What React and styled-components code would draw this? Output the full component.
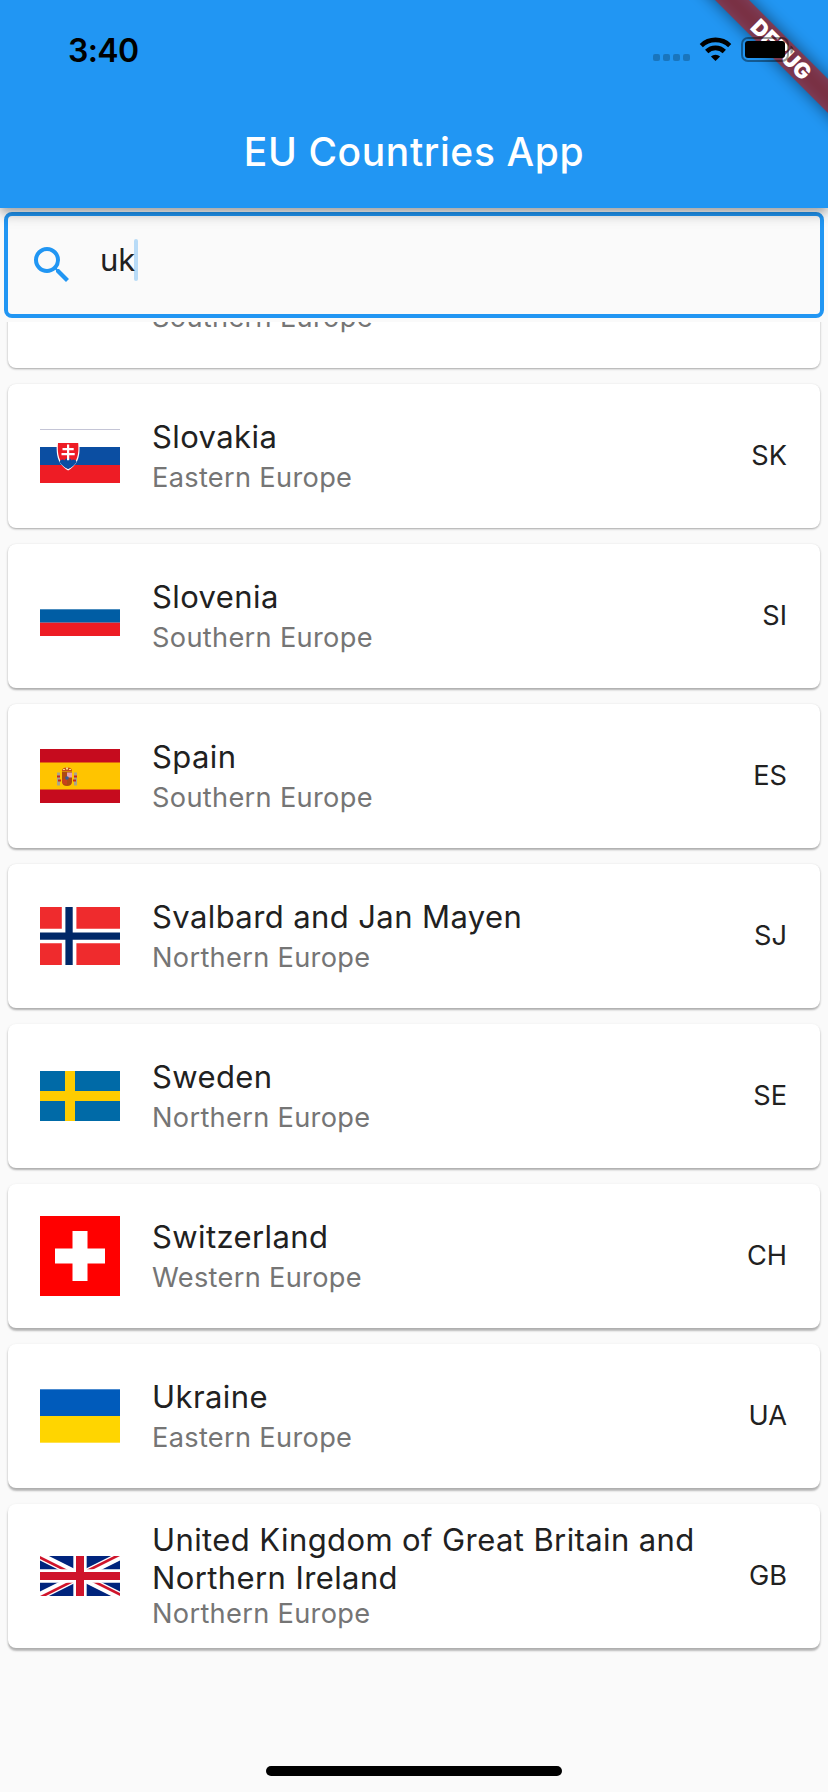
import React from "react";
import styled, { createGlobalStyle } from "styled-components";
import { MdSearch } from "react-icons/md";

const GlobalStyle = createGlobalStyle`
  * { box-sizing: border-box; }
  body {
    margin: 0;
    background: #fafafa;
    color: #212121;
    font-family: Inter, "Liberation Sans", sans-serif;
  }
`;

const Screen = styled.div`
  position: relative;
  width: 828px;
  height: 1792px;
  overflow: hidden;
  display: flex;
  flex-direction: column;
  background: #fafafa;
`;

const Header = styled.header`
  position: relative;
  z-index: 1;
  flex: none;
  height: 208px;
  display: flex;
  flex-direction: column;
  background: #2196f3;
  box-shadow: 0 4px 8px -2px rgba(0, 0, 0, 0.2), 0 8px 10px rgba(0, 0, 0, 0.14),
    0 2px 20px rgba(0, 0, 0, 0.12);
`;

const StatusBar = styled.div`
  position: relative;
  z-index: 2;
  height: 96px;
  padding: 0 33px 0 68px;
  display: flex;
  justify-content: space-between;
  color: #000;
`;

const Clock = styled.span`
  padding-top: 31px;
  font-size: 32px;
  line-height: 39px;
  font-weight: 600;
  letter-spacing: -0.6px;
`;

const StatusIcons = styled.svg`
  width: 145px;
  height: 30px;
  margin-top: 35px;
`;

const Title = styled.h1`
  margin: 0;
  height: 112px;
  text-align: center;
  font-size: 39px;
  line-height: 112px;
  font-weight: 500;
  letter-spacing: 0.6px;
  color: #fff;
`;

const BannerCorner = styled.div`
  position: absolute;
  top: 0;
  right: 0;
  width: 200px;
  height: 200px;
  overflow: hidden;
  z-index: 1;
`;

const Ribbon = styled.div`
  position: absolute;
  left: 32px;
  top: 36px;
  width: 240px;
  height: 24px;
  transform: rotate(45deg);
  display: grid;
  place-items: center;
  font-size: 21.6px;
  line-height: 24px;
  font-weight: 900;
  color: #fff;
`;

const RibbonShadow = styled.div`
  grid-area: 1 / 1;
  width: 240px;
  height: 24px;
  background: rgba(0, 0, 0, 0.5);
  filter: blur(8px);
`;

const RibbonBand = styled.div`
  grid-area: 1 / 1;
  width: 240px;
  height: 24px;
  padding-left: 4px;
  position: relative;
  text-align: center;
  background: rgba(183, 28, 28, 0.627);
`;

const SearchField = styled.div`
  flex: none;
  height: 106px;
  margin: 4px;
  padding: 0 20px;
  border: 4px solid #2196f3;
  border-radius: 8px;
  display: flex;
  align-items: flex-start;
`;

const SearchIcon = styled(MdSearch)`
  flex: none;
  width: 48px;
  height: 48px;
  margin-top: 25px;
  color: #2196f3;
`;

const Query = styled.span`
  margin: 23px 0 0 24px;
  font-size: 31px;
  line-height: 42px;
`;

const Caret = styled.span`
  width: 4px;
  height: 42px;
  margin: 23px 0 0 -1px;
  border-radius: 2px;
  background: rgba(33, 150, 243, 0.3);
`;

const List = styled.ul`
  flex: none;
  height: 1384px;
  margin: 0;
  padding: 0 8px 58px;
  overflow: hidden;
  list-style: none;
  display: flex;
  flex-direction: column;
  justify-content: flex-end;
  gap: 16px;
`;

const Card = styled.li`
  flex: none;
  height: 144px;
  padding: 0 33px 0 32px;
  border-radius: 8px;
  display: flex;
  align-items: center;
  background: #fff;
  box-shadow: 0 ${(p) => p.$drop}px 2px rgba(0, 0, 0, 0.24),
    0 1px 3px rgba(0, 0, 0, 0.12);
`;

const FlagBox = styled.div`
  flex: none;
  width: 80px;
  display: flex;

  svg {
    display: block;
    width: 80px;
  }
`;

const Labels = styled.div`
  flex: 1;
  min-width: 0;
  margin-left: 32px;
  padding-top: 1px;
`;

const Name = styled.div`
  max-width: 570px;
  min-height: 38px;
  font-size: 31px;
  line-height: 38px;
  letter-spacing: 0.4px;
`;

const Region = styled.div`
  margin-top: ${(p) => (p.$tall ? -1 : 4)}px;
  font-size: 27.2px;
  line-height: 36px;
  letter-spacing: 0.32px;
  color: #757575;
`;

const Code = styled.span`
  font-size: 27.2px;
  line-height: 36px;
`;

const HomeIndicator = styled.div`
  position: absolute;
  left: 266px;
  bottom: 16px;
  width: 296px;
  height: 10px;
  border-radius: 5px;
  background: #000;
`;

const flags = {
  SK: (
    <svg viewBox="0 0 80 54" height="54">
      <rect width="80" height="54" fill="#fff" />
      <rect width="80" height="1" fill="#c4c5d6" />
      <rect y="18" width="80" height="18" fill="#0b4ea2" />
      <rect y="36" width="80" height="18" fill="#ee1c25" />
      <path d="M16.9 13h22.4c.8 11 .3 22-11.2 28.4C16.6 35 16.1 24 16.9 13z" fill="#fff" />
      <path d="M18 14h20.2c.8 10-.2 20-10.1 26C18.2 34 17.2 24 18 14z" fill="#ee1c25" />
      <path d="M19.6 33c1-3 4-3 5-1.500 1-3 6-3 7 0 1-1.500 4-1.500 5 1.500-2 3-4.500 5.500-8.500 7-4-1.500-6.500-4-8.500-7z" fill="#0b4ea2" />
      <path d="M27 15.500h2.200v3.500h4.500v2.200h-4.500v2.800h5.500v2.200h-5.500v5h-2.200v-5h-5.500v-2.200h5.500v-2.800h-4.500v-2.200h4.500z" fill="#fff" />
    </svg>
  ),
  SI: (
    <svg viewBox="0 0 80 40" height="40">
      <rect width="80" height="40" fill="#fff" />
      <rect y="13.3" width="80" height="13.4" fill="#005da4" />
      <rect y="26.7" width="80" height="13.3" fill="#ed1c24" />
    </svg>
  ),
  ES: (
    <svg viewBox="0 0 80 54" height="54">
      <rect width="80" height="54" fill="#c60b1e" />
      <rect y="13.5" width="80" height="27" fill="#ffc400" />
      <g transform="translate(17 17.500)">
        <path d="M0 6h3v13H0zM17 6h3v13h-3z" fill="#a9a58a" />
        <path d="M0 9h3v2H0zM17 9h3v2h-3zM1 13h3v2H1zM16 13h3v2h-3z" fill="#c8281e" />
        <path d="M5 5h10v10c0 3-2 4.500-5 4.500S5 18 5 15z" fill="#ad4a12" />
        <path d="M10 6h5v5h-5z" fill="#e5a0ac" />
        <path d="M5 13h5v5c-3 0-5-1-5-3z" fill="#c8401c" />
        <circle cx="10" cy="11.5" r="1.8" fill="#345c9c" />
        <path d="M5 4.500c0-3 3-3.500 5-3.500s5 .5 5 3.500z" fill="#c84a1e" />
        <path d="M6 2.500h2v1H6zM9 1h2v2H9zM12 2.500h2v1h-2z" fill="#f5e08a" />
      </g>
    </svg>
  ),
  SJ: (
    <svg viewBox="0 0 80 58" height="58">
      <rect width="80" height="58" fill="#ef2b2d" />
      <path d="M21.8 0h14.600v58H21.800zM0 21.800h80v14.500H0z" fill="#fff" />
      <path d="M25.4 0h7.300v58h-7.300zM0 25.400h80v7.300H0z" fill="#002868" />
    </svg>
  ),
  SE: (
    <svg viewBox="0 0 80 50" height="50">
      <rect width="80" height="50" fill="#006aa7" />
      <path d="M25 0h10v50H25zM0 20h80v10H0z" fill="#fecc00" />
    </svg>
  ),
  CH: (
    <svg viewBox="0 0 80 80" height="80">
      <rect width="80" height="80" fill="#f00" />
      <path d="M32.5 15h15v17.500H65v15H47.500V65h-15V47.500H15v-15h17.500z" fill="#fff" />
    </svg>
  ),
  UA: (
    <svg viewBox="0 0 80 54" height="54">
      <rect y="0.3" width="80" height="27" fill="#005bbb" />
      <rect y="27" width="80" height="26.7" fill="#ffd500" />
    </svg>
  ),
  GB: (
    <svg viewBox="0 0 60 30" height="40">
      <clipPath id="saltire">
        <path d="M30 15h30v15zv15H0zH0V0zV0h30z" />
      </clipPath>
      <path d="M0 0v30h60V0z" fill="#00247d" />
      <path d="M0 0l60 30m0-30L0 30" stroke="#fff" strokeWidth="6" />
      <path d="M0 0l60 30m0-30L0 30" clipPath="url(#saltire)" stroke="#cf142b" strokeWidth="4" />
      <path d="M30 0v30M0 15h60" stroke="#fff" strokeWidth="10" />
      <path d="M30 0v30M0 15h60" stroke="#cf142b" strokeWidth="6" />
    </svg>
  ),
};

const countries = [
  { code: "", name: "", region: "Southern Europe", drop: 1 },
  { code: "SK", name: "Slovakia", region: "Eastern Europe", drop: 1 },
  { code: "SI", name: "Slovenia", region: "Southern Europe", drop: 1.2 },
  { code: "ES", name: "Spain", region: "Southern Europe", drop: 1.4 },
  { code: "SJ", name: "Svalbard and Jan Mayen", region: "Northern Europe", drop: 1.7 },
  { code: "SE", name: "Sweden", region: "Northern Europe", drop: 2 },
  { code: "CH", name: "Switzerland", region: "Western Europe", drop: 2.3 },
  { code: "UA", name: "Ukraine", region: "Eastern Europe", drop: 2.6 },
  {
    code: "GB",
    name: "United Kingdom of Great Britain and Northern Ireland",
    region: "Northern Europe",
    drop: 3,
    tall: true,
  },
];

function DebugBanner() {
  return (
    <BannerCorner>
      <Ribbon>
        <RibbonShadow />
        <RibbonBand>DEBUG</RibbonBand>
      </Ribbon>
    </BannerCorner>
  );
}

function StatusGlyphs() {
  return (
    <StatusIcons viewBox="650 35 145 30">
      <g fill="#000" fillOpacity="0.22">
        <rect x="653" y="54" width="7" height="7" rx="2" />
        <rect x="663" y="54" width="7" height="7" rx="2" />
        <rect x="673" y="54" width="7" height="7" rx="2" />
        <rect x="683" y="54" width="7" height="7" rx="2" />
      </g>
      <g fill="none" stroke="#000" strokeWidth="4.6">
        <path d="M701.3 45.600a20.500 20.500 0 0 1 28.400 0" />
        <path d="M706.7 51.500a12.500 12.500 0 0 1 17.600 0" />
      </g>
      <path d="M715.5 61l-4.600-4.400a6.700 6.700 0 0 1 9.200 0z" />
      <rect x="742" y="38" width="46" height="23" rx="6" fill="none" stroke="#000" strokeOpacity="0.4" strokeWidth="2" />
      <rect x="745" y="41" width="40" height="17" rx="3" />
      <path d="M790.5 45.500c4 1.500 4 7 0 8.500z" fillOpacity="0.4" />
    </StatusIcons>
  );
}

function CountryCard({ country }) {
  return (
    <Card $drop={country.drop}>
      <FlagBox>{flags[country.code]}</FlagBox>
      <Labels>
        <Name>{country.name}</Name>
        <Region $tall={country.tall}>{country.region}</Region>
      </Labels>
      <Code>{country.code}</Code>
    </Card>
  );
}

export default function App() {
  return (
    <>
      <GlobalStyle />
      <Screen>
        <Header>
          <StatusBar>
            <Clock>3:40</Clock>
            <StatusGlyphs />
          </StatusBar>
          <Title>EU Countries App</Title>
          <DebugBanner />
        </Header>
        <SearchField>
          <SearchIcon />
          <Query>uk</Query>
          <Caret />
        </SearchField>
        <List>
          {countries.map((country) => (
            <CountryCard key={country.name} country={country} />
          ))}
        </List>
        <HomeIndicator />
      </Screen>
    </>
  );
}
